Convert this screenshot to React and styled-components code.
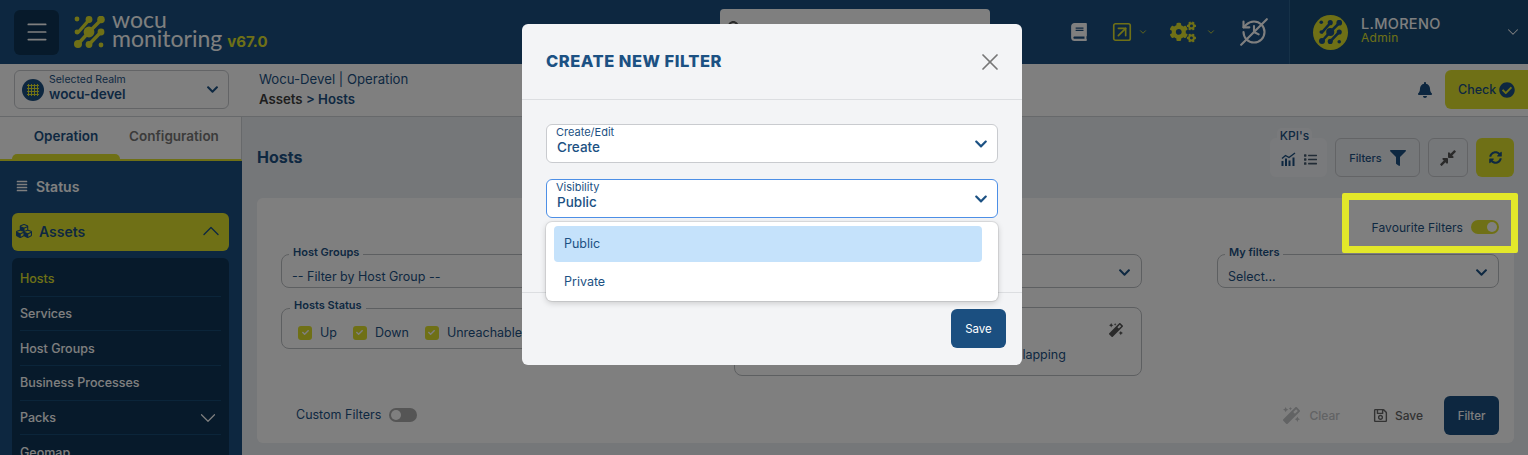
import React from "react";
import styled, { createGlobalStyle } from "styled-components";
import {
  FaBook,
  FaCogs,
  FaBell,
  FaFilter,
  FaSyncAlt,
  FaCompressAlt,
  FaCubes,
  FaCheckCircle,
  FaList,
  FaMagic,
  FaRegSave,
  FaAlignJustify,
  FaCheck,
  FaChevronDown,
  FaSearch,
} from "react-icons/fa";
import { ChevronDown, ChevronUp, Menu, SquareArrowUpRight, X } from "lucide-react";

const blue = "#1c5183";
const navy = "#1b4f80";
const lime = "#dfe12d";

const GlobalStyle = createGlobalStyle`
  html, body {
    margin: 0;
    height: 455px;
    overflow: hidden;
  }
  body {
    font-family: "Inter", "Liberation Sans", sans-serif;
    color: ${blue};
  }
  * { box-sizing: border-box; }
`;

const LogoMark = ({ size, color }) => (
  <svg width={size} height={size} viewBox="0 0 32 32" fill={color} stroke={color}>
    <g strokeWidth="3.4" strokeLinecap="round">
      <path d="M4 28 L15 16 L27 4" />
      <path d="M4 16.5 L15 4" />
      <path d="M15 28.5 L27 16" />
    </g>
    <g stroke="none">
      <circle cx="3" cy="3" r="2.4" />
      <circle cx="15" cy="3.5" r="3.4" />
      <circle cx="27" cy="3.5" r="3.8" />
      <circle cx="3" cy="16" r="2.4" />
      <circle cx="15" cy="16" r="5.4" />
      <circle cx="27" cy="16" r="3.4" />
      <circle cx="4" cy="28" r="4" />
      <circle cx="15" cy="28.5" r="3.4" />
      <circle cx="27" cy="29" r="2.4" />
    </g>
  </svg>
);

const HistoryOff = () => (
  <svg width="28" height="28" viewBox="0 0 24 24" fill="none" stroke="#fff" strokeWidth="1.8" strokeLinecap="round" strokeLinejoin="round">
    <path d="M3 12a9 9 0 1 0 9-9 9.75 9.75 0 0 0-6.74 2.74L3 8" />
    <path d="M3 3v5h5" />
    <path d="M12 7v5l4 2" />
    <path d="M1 23 L23 1" />
  </svg>
);

const ChartBars = () => (
  <svg width="15" height="14" viewBox="0 0 15 14" fill="none" stroke={navy}>
    <path d="M1 6.5 L4.5 3.5 L8 5.5 L14 1" strokeWidth="1.4" />
    <path d="M1.5 14 V9 M5 14 V6.5 M8.5 14 V8.5 M12.5 14 V5.5" strokeWidth="2" />
  </svg>
);

const SelectField = ({ legend, value }) => (
  <FieldSet>
    <FieldLegend>{legend}</FieldLegend>
    <FieldValue>{value}</FieldValue>
    <FieldChevron><FaChevronDown size={13} /></FieldChevron>
  </FieldSet>
);

const Check = ({ label }) => (
  <CheckItem>
    <CheckBox><FaCheck size={7} /></CheckBox>
    {label}
  </CheckItem>
);

const App = () => (
  <>
    <GlobalStyle />
    <Page>
      <Header>
        <Brand>
          <MenuButton><Menu size={26} strokeWidth={1.6} /></MenuButton>
          <LogoMark size={32} color={lime} />
          <LogoText>
            <LogoWord>wocu</LogoWord>
            <LogoWord>monitoring<Version>v67.0</Version></LogoWord>
          </LogoText>
        </Brand>
        <SearchBox><FaSearch size={13} color="#555" /></SearchBox>
        <Tools>
          <FaBook size={18} color="#fff" />
          <ToolGroup $left={23} $gap={5}>
            <SquareArrowUpRight size={22} color={lime} strokeWidth={1.8} />
            <ChevronDown size={10} color={lime} />
          </ToolGroup>
          <ToolGroup $left={22} $gap={10}>
            <FaCogs size={26} color={lime} />
            <ChevronDown size={10} color={lime} />
          </ToolGroup>
          <ToolGroup $left={24}><HistoryOff /></ToolGroup>
        </Tools>
        <UserBox>
          <Avatar><LogoMark size={24} color={navy} /></Avatar>
          <UserText>
            <UserName>L.MORENO</UserName>
            <UserRole>Admin</UserRole>
          </UserText>
          <ChevronDown size={18} color="#fff" strokeWidth={1.4} />
        </UserBox>
      </Header>

      <SubHeader>
        <RealmSelect>
          <RealmIcon><RealmDots /></RealmIcon>
          <RealmText>
            <RealmLabel>Selected Realm</RealmLabel>
            <RealmName>wocu-devel</RealmName>
          </RealmText>
          <FaChevronDown size={13} />
        </RealmSelect>
        <Breadcrumb>
          <span>Wocu-Devel | Operation</span>
          <strong><b>Assets</b> &gt; Hosts</strong>
        </Breadcrumb>
        <SubActions>
          <FaBell size={16} />
          <CheckButton>Check <FaCheckCircle size={16} /></CheckButton>
        </SubActions>
      </SubHeader>

      <Body>
        <Sidebar>
          <Tabs>
            <Tab $active>Operation</Tab>
            <Tab>Configuration</Tab>
          </Tabs>
          <Nav>
            <StatusRow><FaAlignJustify size={12} /> Status</StatusRow>
            <AssetsRow>
              <FaCubes size={16} />
              <span>Assets</span>
              <ChevronUp size={28} strokeWidth={1.2} />
            </AssetsRow>
            <SubMenu>
              <SubItem $active>Hosts</SubItem>
              <SubItem>Services</SubItem>
              <SubItem>Host Groups</SubItem>
              <SubItem>Business Processes</SubItem>
              <SubItem>Packs <ChevronDown size={26} strokeWidth={1.1} /></SubItem>
              <SubItem>Geomap</SubItem>
            </SubMenu>
          </Nav>
        </Sidebar>

        <Main>
          <TitleRow>
            <Title>Hosts</Title>
            <TitleActions>
              <KpiBox>
                <KpiLabel>KPI's</KpiLabel>
                <ChartBars />
                <FaList size={13} color="#44596d" />
              </KpiBox>
              <OutlineButton $width={85}>Filters <FaFilter size={16} /></OutlineButton>
              <OutlineButton $width={40}><FaCompressAlt size={18} color="#555" /></OutlineButton>
              <RefreshButton><FaSyncAlt size={13} /></RefreshButton>
            </TitleActions>
          </TitleRow>

          <Panel>
            <FavouriteRow>
              Favourite Filters
              <Toggle $on />
            </FavouriteRow>
            <FieldGrid>
              <SelectField legend="Host Groups" value="-- Filter by Host Group --" />
              <SelectField legend="Services" value="" />
              <SelectField legend="My filters" value="Select..." />
              <StatusField>
                <StatusLegend>Hosts Status</StatusLegend>
                <Check label="Up" />
                <Check label="Down" />
                <Check label="Unreachable" />
              </StatusField>
              <OptionsBox>
                <WandSlot><FaMagic size={14} color="#555" /></WandSlot>
                <FlappingText>Flapping</FlappingText>
              </OptionsBox>
            </FieldGrid>
            <PanelFooter>
              <CustomFilters>
                Custom Filters
                <Toggle />
              </CustomFilters>
              <FooterActions>
                <GhostAction $muted><FaMagic size={17} /> Clear</GhostAction>
                <GhostAction><FaRegSave size={15} /> Save</GhostAction>
                <FilterButton>Filter</FilterButton>
              </FooterActions>
            </PanelFooter>
          </Panel>
        </Main>
      </Body>

      <Overlay />
      <Highlight />

      <Modal>
        <ModalHeader>
          <ModalTitle>CREATE NEW FILTER</ModalTitle>
          <X size={28} color="#777" strokeWidth={1.5} />
        </ModalHeader>
        <ModalBody>
          <ModalSelect>
            <ModalSelectText>
              <small>Create/Edit</small>
              <span>Create</span>
            </ModalSelectText>
            <FaChevronDown size={14} />
          </ModalSelect>
          <ModalSelect $focused>
            <ModalSelectText>
              <small>Visibility</small>
              <span>Public</span>
            </ModalSelectText>
            <FaChevronDown size={14} />
          </ModalSelect>
          <Dropdown>
            <Option $selected>Public</Option>
            <Option>Private</Option>
          </Dropdown>
        </ModalBody>
        <ModalFooter>
          <SaveButton>Save</SaveButton>
        </ModalFooter>
      </Modal>
    </Page>
  </>
);

const Page = styled.div`
  position: relative;
  width: 1528px;
  height: 455px;
  overflow: hidden;
  background: #ebeef3;
  display: flex;
  flex-direction: column;
`;

const Header = styled.header`
  height: 64px;
  flex: none;
  background: ${navy};
  display: flex;
  align-items: center;
`;

const Brand = styled.div`
  width: 720px;
  padding-left: 14px;
  display: flex;
  align-items: center;
  gap: 15px;
`;

const MenuButton = styled.div`
  width: 45px;
  height: 45px;
  border-radius: 6px;
  background: #0e3556;
  color: #fff;
  display: flex;
  align-items: center;
  justify-content: center;
`;

const LogoText = styled.div`
  display: flex;
  flex-direction: column;
  margin: -3px 0 0 -9px;
  color: #fff;
`;

const LogoWord = styled.div`
  font-family: "Lato", sans-serif;
  font-size: 23px;
  line-height: 19px;
  white-space: nowrap;
`;

const Version = styled.span`
  font-family: "Inter", sans-serif;
  font-size: 15px;
  font-weight: 700;
  color: ${lime};
  margin-left: 5px;
`;

const SearchBox = styled.div`
  width: 270px;
  height: 44px;
  margin-top: -2px;
  padding: 9px 0 0 8px;
  background: #fff;
  border-radius: 4px;
`;

const Tools = styled.div`
  margin-left: auto;
  width: 219px;
  display: flex;
  align-items: center;
`;

const ToolGroup = styled.div`
  display: flex;
  align-items: center;
  gap: ${({ $gap }) => $gap || 9}px;
  margin-left: ${({ $left }) => $left}px;
`;

const UserBox = styled.div`
  width: 239px;
  height: 64px;
  border-left: 1px solid #2c6291;
  background: #184a75;
  display: flex;
  align-items: center;
  padding: 0 6px 0 23px;
  color: #fff;
`;

const Avatar = styled.div`
  width: 35px;
  height: 35px;
  border-radius: 50%;
  background: ${lime};
  display: flex;
  align-items: center;
  justify-content: center;
`;

const UserText = styled.div`
  flex: 1;
  margin-left: 13px;
  padding-bottom: 4px;
  display: flex;
  flex-direction: column;
`;

const UserName = styled.div`
  font-size: 14.5px;
  font-weight: 500;
  line-height: 15px;
  letter-spacing: 0.3px;
`;

const UserRole = styled.div`
  font-size: 12px;
  line-height: 14px;
  color: ${lime};
  letter-spacing: 0.3px;
`;

const SubHeader = styled.div`
  height: 53px;
  flex: none;
  background: #fff;
  border-bottom: 1px solid #cfd2d6;
  display: flex;
  align-items: center;
  padding-left: 14px;
`;

const RealmSelect = styled.div`
  width: 215px;
  height: 39px;
  margin-top: -1px;
  border: 1px solid #c6c9cd;
  border-radius: 6px;
  display: flex;
  align-items: center;
  padding: 0 9px 0 7px;
`;

const RealmIcon = styled.div`
  width: 22px;
  height: 22px;
  border-radius: 50%;
  background: ${navy};
  display: flex;
  align-items: center;
  justify-content: center;
`;

const RealmDots = styled.div`
  width: 12px;
  height: 12px;
  background: radial-gradient(circle, ${lime} 1px, transparent 1.4px) 0 0 / 3px 3px;
`;

const RealmText = styled.div`
  flex: 1;
  margin-left: 5px;
  padding-bottom: 5px;
  display: flex;
  flex-direction: column;
`;

const RealmLabel = styled.div`
  font-size: 10.5px;
  line-height: 13px;
`;

const RealmName = styled.div`
  font-size: 13.5px;
  font-weight: 600;
  line-height: 16px;
`;

const Breadcrumb = styled.div`
  margin: -2px 0 0 30px;
  display: flex;
  flex-direction: column;
  font-size: 13.2px;
  line-height: 20px;
  strong { font-weight: 600; }
  b { color: #3c3c3c; font-weight: 600; }
`;

const SubActions = styled.div`
  margin-left: auto;
  margin-top: -1px;
  display: flex;
  align-items: center;
  gap: 12px;
  color: ${navy};
`;

const CheckButton = styled.div`
  width: 83px;
  height: 39px;
  background: ${lime};
  border-radius: 6px 0 0 6px;
  display: flex;
  align-items: center;
  padding-left: 13px;
  gap: 3px;
  font-size: 12.5px;
  font-weight: 500;
`;

const Body = styled.div`
  flex: 1;
  display: flex;
  min-height: 0;
`;

const Sidebar = styled.aside`
  width: 242px;
  flex: none;
  display: flex;
  flex-direction: column;
  background: ${navy};
`;

const Tabs = styled.div`
  height: 44px;
  flex: none;
  background: #fff;
  border-right: 1px solid #cfd2d6;
  border-bottom: 2px solid ${lime};
  display: flex;
  padding-left: 12px;
`;

const Tab = styled.div`
  position: relative;
  width: 108px;
  text-align: center;
  padding-top: 11px;
  font-size: 13.5px;
  font-weight: 600;
  color: ${({ $active }) => ($active ? blue : "#777")};
  &::after {
    content: "";
    display: ${({ $active }) => ($active ? "block" : "none")};
    position: absolute;
    left: 0;
    right: 0;
    bottom: 0;
    height: 5px;
    background: ${lime};
    border-radius: 5px 5px 0 0;
  }
`;

const Nav = styled.nav`
  flex: 1;
  padding: 0 13px 0 12px;
`;

const StatusRow = styled.div`
  height: 52px;
  padding: 0 0 2px 4px;
  display: flex;
  align-items: center;
  gap: 8px;
  color: #fff;
  font-size: 14px;
  font-weight: 600;
`;

const AssetsRow = styled.div`
  height: 38px;
  background: ${lime};
  border-radius: 6px;
  display: flex;
  align-items: center;
  gap: 7px;
  padding: 0 4px 2px 4px;
  font-size: 14px;
  font-weight: 600;
  span { flex: 1; }
`;

const SubMenu = styled.div`
  margin-top: 7px;
  background: #0e3556;
  border-radius: 6px;
  padding: 4px 8px 0;
`;

const SubItem = styled.div`
  height: 34.7px;
  display: flex;
  align-items: center;
  justify-content: space-between;
  border-bottom: 1px solid #174a74;
  font-size: 12.5px;
  font-weight: 500;
  color: ${({ $active }) => ($active ? lime : "#fff")};
`;

const Main = styled.main`
  flex: 1;
  min-width: 0;
  padding: 0 14px 12px 15px;
  display: flex;
  flex-direction: column;
`;

const TitleRow = styled.div`
  height: 81px;
  flex: none;
  display: flex;
  align-items: flex-start;
  justify-content: space-between;
`;

const Title = styled.h1`
  margin: 30px 0 0;
  font-size: 16px;
  line-height: 20px;
  font-weight: 700;
`;

const TitleActions = styled.div`
  margin-top: 21px;
  display: flex;
  gap: 8px;
`;

const KpiBox = styled.div`
  position: relative;
  width: 57px;
  height: 39px;
  background: #f3f5f8;
  border-radius: 6px;
  display: flex;
  align-items: center;
  justify-content: center;
  gap: 8px;
  padding-top: 3px;
`;

const KpiLabel = styled.div`
  position: absolute;
  left: 7px;
  top: -10px;
  width: 35px;
  background: #f3f5f8;
  border-radius: 5px 5px 0 0;
  text-align: center;
  font-size: 12px;
  line-height: 16px;
  font-weight: 500;
`;

const OutlineButton = styled.div`
  width: ${({ $width }) => $width}px;
  height: 39px;
  border: 1px solid #c6c9cd;
  border-radius: 6px;
  display: flex;
  align-items: center;
  justify-content: center;
  gap: 8px;
  font-size: 11px;
  font-weight: 500;
`;

const RefreshButton = styled.div`
  width: 38px;
  height: 39px;
  background: ${lime};
  border-radius: 6px;
  display: flex;
  align-items: center;
  justify-content: center;
`;

const Panel = styled.section`
  flex: 1;
  background: #fff;
  border-radius: 6px;
  padding: 20px 15px 8px 24px;
  display: flex;
  flex-direction: column;
  min-height: 0;
`;

const FavouriteRow = styled.div`
  height: 18px;
  display: flex;
  align-items: center;
  justify-content: flex-end;
  gap: 8px;
  font-size: 12.1px;
`;

const Toggle = styled.span`
  position: relative;
  width: 28px;
  height: 14px;
  border-radius: 7px;
  background: ${({ $on }) => ($on ? lime : "#aaa")};
  &::after {
    content: "";
    position: absolute;
    top: 2px;
    left: ${({ $on }) => ($on ? "16px" : "2px")};
    width: 10px;
    height: 10px;
    border-radius: 50%;
    background: #fff;
  }
`;

const FieldGrid = styled.div`
  margin-top: 10px;
  display: grid;
  grid-template-columns: 419px 408px 282px;
  column-gap: 34px;
  grid-template-rows: 42px auto;
  row-gap: 11px;
  & > :nth-child(3) { margin-left: 41px; width: 282px; }
`;

const FieldSet = styled.fieldset`
  position: relative;
  margin: 0;
  padding: 0 10px;
  min-width: 0;
  height: 42px;
  border: 1px solid #bbbec2;
  border-radius: 8px;
`;

const FieldLegend = styled.legend`
  padding: 0 4px 3px;
  margin-left: -3px;
  font-size: 11px;
  line-height: 13px;
  font-weight: 600;
`;

const StatusLegend = styled(FieldLegend)`
  margin-left: -8px;
  padding-bottom: 5px;
`;

const FieldValue = styled.div`
  font-size: 12.5px;
  line-height: 18px;
  margin-top: 6px;
  white-space: nowrap;
`;

const FieldChevron = styled.span`
  position: absolute;
  right: 10px;
  top: 4px;
  line-height: 0;
`;

const StatusField = styled.fieldset`
  margin: 0;
  padding: 0 16px;
  min-width: 0;
  height: 50px;
  border: 1px solid #bbbec2;
  border-radius: 8px;
  display: flex;
  align-items: center;
  gap: 16px;
`;

const CheckItem = styled.label`
  display: flex;
  align-items: center;
  gap: 8px;
  font-size: 12.5px;
  white-space: nowrap;
`;

const CheckBox = styled.span`
  width: 14px;
  height: 14px;
  border-radius: 3px;
  background: ${lime};
  color: #fff;
  display: flex;
  align-items: center;
  justify-content: center;
`;

const OptionsBox = styled.div`
  height: 69px;
  margin-top: 8px;
  border: 1px solid #bbbec2;
  border-radius: 8px;
  padding: 15px 18px 0 280px;
  display: flex;
  flex-direction: column;
`;

const WandSlot = styled.div`
  align-self: flex-end;
  line-height: 0;
`;

const FlappingText = styled.div`
  margin-top: 10px;
  font-size: 12.5px;
  line-height: 16px;
`;

const PanelFooter = styled.div`
  margin-top: auto;
  display: flex;
  align-items: center;
  justify-content: space-between;
`;

const CustomFilters = styled.div`
  margin: -2px 0 0 15px;
  display: flex;
  align-items: center;
  gap: 8px;
  font-size: 12.5px;
`;

const FooterActions = styled.div`
  display: flex;
  align-items: center;
  gap: 21px;
`;

const GhostAction = styled.div`
  display: flex;
  align-items: center;
  gap: ${({ $muted }) => ($muted ? "9px" : "7px")};
  margin-right: ${({ $muted }) => ($muted ? "12px" : "0")};
  font-size: 12px;
  font-weight: 500;
  color: ${({ $muted }) => ($muted ? "#c4c6c9" : "#666")};
`;

const FilterButton = styled.div`
  width: 55px;
  height: 39px;
  background: ${navy};
  color: #fff;
  border-radius: 6px;
  display: flex;
  align-items: center;
  justify-content: center;
  font-size: 11.5px;
  font-weight: 500;
`;

const Overlay = styled.div`
  position: absolute;
  inset: 0;
  background: rgba(0, 0, 0, 0.5);
`;

const Highlight = styled.div`
  position: absolute;
  left: 1342px;
  top: 193px;
  width: 176px;
  height: 60px;
  border: 7px solid #e3e82a;
  border-radius: 2px;
`;

const Modal = styled.div`
  position: absolute;
  left: 522px;
  top: 24px;
  width: 500px;
  height: 341px;
  background: #f3f4f6;
  border-radius: 6px;
  display: flex;
  flex-direction: column;
`;

const ModalHeader = styled.div`
  height: 76px;
  flex: none;
  border-bottom: 1px solid #dcdee1;
  display: flex;
  align-items: center;
  justify-content: space-between;
  padding: 0 18px 0 24px;
`;

const ModalTitle = styled.h2`
  margin: 0 0 2px;
  font-size: 16.5px;
  font-weight: 800;
  letter-spacing: 0.5px;
  color: ${blue};
`;

const ModalBody = styled.div`
  position: relative;
  height: 193px;
  flex: none;
  border-bottom: 1px solid #dcdee1;
  padding: 24px 24px 0;
  display: flex;
  flex-direction: column;
  gap: 16px;
`;

const ModalSelect = styled.div`
  height: 39px;
  background: #fff;
  border: 1px solid ${({ $focused }) => ($focused ? "#4d8fe6" : "#c9cbcf")};
  border-radius: 6px;
  display: flex;
  align-items: center;
  padding: 0 9px 0 10px;
`;

const ModalSelectText = styled.div`
  flex: 1;
  padding-bottom: 6px;
  display: flex;
  flex-direction: column;
  small { font-size: 11px; line-height: 12px; margin-left: -1px; }
  span { font-size: 13.5px; font-weight: 500; line-height: 18px; }
`;

const Dropdown = styled.div`
  position: absolute;
  left: 24px;
  top: 122px;
  width: 452px;
  height: 79px;
  background: #fff;
  border-radius: 6px;
  padding: 4px 16px 0 8px;
  box-shadow: 0 0 0 1px rgba(0, 0, 0, 0.08), 0 2px 6px rgba(0, 0, 0, 0.18);
`;

const Option = styled.div`
  height: ${({ $selected }) => ($selected ? "36px" : "38px")};
  padding: 0 0 ${({ $selected }) => ($selected ? "2px" : "0")} 10px;
  display: flex;
  align-items: center;
  border-radius: 4px;
  background: ${({ $selected }) => ($selected ? "#c5e2fb" : "transparent")};
  font-size: 12.5px;
`;

const ModalFooter = styled.div`
  flex: 1;
  display: flex;
  justify-content: flex-end;
  align-items: flex-start;
  padding: 16px 16px 0 0;
`;

const SaveButton = styled.div`
  width: 55px;
  height: 39px;
  background: ${navy};
  color: #fff;
  border-radius: 6px;
  display: flex;
  align-items: center;
  justify-content: center;
  font-size: 11.5px;
  font-weight: 400;
`;

export default App;
